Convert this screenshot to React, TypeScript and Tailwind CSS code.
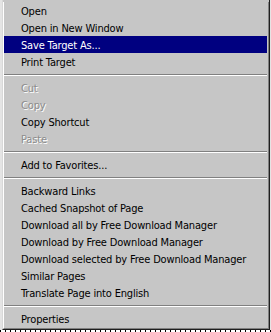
import React from "react";

type Item =
  | { kind: "item"; label: string; disabled?: boolean; active?: boolean }
  | { kind: "sep" };

const items: Item[] = [
  { kind: "item", label: "Open" },
  { kind: "item", label: "Open in New Window" },
  { kind: "item", label: "Save Target As...", active: true },
  { kind: "item", label: "Print Target" },
  { kind: "sep" },
  { kind: "item", label: "Cut", disabled: true },
  { kind: "item", label: "Copy", disabled: true },
  { kind: "item", label: "Copy Shortcut" },
  { kind: "item", label: "Paste", disabled: true },
  { kind: "sep" },
  { kind: "item", label: "Add to Favorites..." },
  { kind: "sep" },
  { kind: "item", label: "Backward Links" },
  { kind: "item", label: "Cached Snapshot of Page" },
  { kind: "item", label: "Download all by Free Download Manager" },
  { kind: "item", label: "Download by Free Download Manager" },
  { kind: "item", label: "Download selected by Free Download Manager" },
  { kind: "item", label: "Similar Pages" },
  { kind: "item", label: "Translate Page into English" },
  { kind: "sep" },
  { kind: "item", label: "Properties" },
];

const MenuRow = ({ item }: { item: Item }) => {
  if (item.kind === "sep") {
    return (
      <div className="h-[9px] flex flex-col justify-center">
        <div className="h-px bg-[#808080]" />
        <div className="h-px bg-white" />
      </div>
    );
  }
  let cls = "h-[17px] flex items-center pl-[17px] pt-px whitespace-nowrap ";
  if (item.active) cls += "bg-[#000080] text-white";
  else if (item.disabled) cls += "text-[#8c8c8c] [text-shadow:1px_1px_0_#ffffff]";
  else cls += "text-black";
  return <div className={cls}>{item.label}</div>;
};

export default function App() {
  return (
    <div className="w-[271px] h-[332px] bg-white flex flex-col overflow-hidden font-[family-name:'DejaVu_Sans_Condensed','DejaVu_Sans',sans-serif] font-stretch-condensed text-[11px] tracking-[-0.17px] leading-none">
      <div className="flex h-[330px]">
        <div className="w-[2px] bg-[#e4e4e4]" />
        <div className="w-[268px] bg-[#c6c6c6] flex flex-col pt-[2px] border-l border-l-[#d8d8d8] border-r border-r-[#202020] border-b border-b-[#202020]">
          <div className="flex flex-1 flex-col pr-px border-l border-l-white border-r border-r-[#808080] border-b border-b-[#808080]">
            {items.map((item, i) => (
              <MenuRow key={i} item={item} />
            ))}
          </div>
        </div>
        <div className="w-px bg-[#e4e4e4]" />
      </div>
      <div className="h-[2px] bg-[repeating-linear-gradient(90deg,#000_0_1px,#fff_1px_5px)]" />
    </div>
  );
}
